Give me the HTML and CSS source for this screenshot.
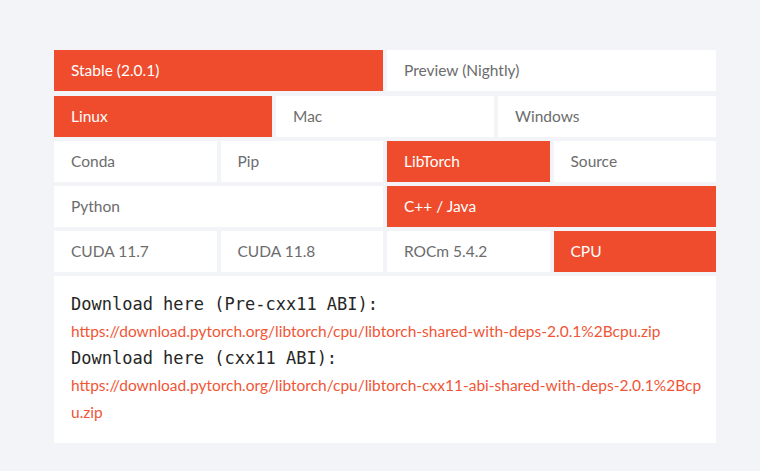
FILE: index.html
```html
<!DOCTYPE html>
<html>
<head>
<meta charset="utf-8">
<link rel="stylesheet" href="styles.css">
</head>
<body>
<div class="page">
  <div class="selector">
    <div class="row cols-2 first">
      <div class="opt active">Stable (2.0.1)</div>
      <div class="opt">Preview (Nightly)</div>
    </div>
    <div class="row cols-3">
      <div class="opt active">Linux</div>
      <div class="opt">Mac</div>
      <div class="opt">Windows</div>
    </div>
    <div class="row cols-4">
      <div class="opt">Conda</div>
      <div class="opt">Pip</div>
      <div class="opt active">LibTorch</div>
      <div class="opt">Source</div>
    </div>
    <div class="row cols-2">
      <div class="opt">Python</div>
      <div class="opt active">C++ / Java</div>
    </div>
    <div class="row cols-4">
      <div class="opt">CUDA 11.7</div>
      <div class="opt">CUDA 11.8</div>
      <div class="opt">ROCm 5.4.2</div>
      <div class="opt active">CPU</div>
    </div>
    <div class="output">
      <div class="mono">Download here (Pre-cxx11 ABI):</div>
      <a class="link" href="#">https://download.pytorch.org/libtorch/cpu/libtorch-shared-with-deps-2.0.1%2Bcpu.zip</a>
      <div class="mono">Download here (cxx11 ABI):</div>
      <a class="link" href="#">https://download.pytorch.org/libtorch/cpu/libtorch-cxx11-abi-shared-with-deps-2.0.1%2Bcpu.zip</a>
    </div>
  </div>
</div>
</body>
</html>
```
FILE: styles.css
```css
html, body {
  margin: 0;
  padding: 0;
  background: #f3f4f7;
}
body {
  width: 760px;
  height: 471px;
  overflow: hidden;
  font-family: Lato, "Open Sans", sans-serif;
}
.page {
  padding: 50px 44px 0 54px;
}
.selector {
  width: 662px;
  display: flex;
  flex-direction: column;
  gap: 5px;
}
.row {
  display: grid;
  gap: 4px;
  height: 40px;
}
.row.first {
  margin-bottom: 1px;
}
.cols-2 { grid-template-columns: repeat(2, 1fr); }
.cols-3 { grid-template-columns: repeat(3, 1fr); }
.cols-4 { grid-template-columns: repeat(4, 1fr); }
.opt {
  background: #ffffff;
  color: #6c6c6d;
  font-size: 15.5px;
  line-height: 41px;
  padding-left: 17px;
  white-space: nowrap;
}
.opt.active {
  background: #ee4c2c;
  color: #ffffff;
}
.output {
  background: #ffffff;
  height: 167px;
  box-sizing: border-box;
  padding: 15px 12px 0 17px;
  line-height: 27px;
}
.mono {
  font-family: "DejaVu Sans Mono", monospace;
  font-size: 17px;
  color: #262626;
}
.link {
  display: block;
  color: #f05536;
  text-decoration: none;
  font-size: 15.5px;
  word-break: break-all;
}
```
